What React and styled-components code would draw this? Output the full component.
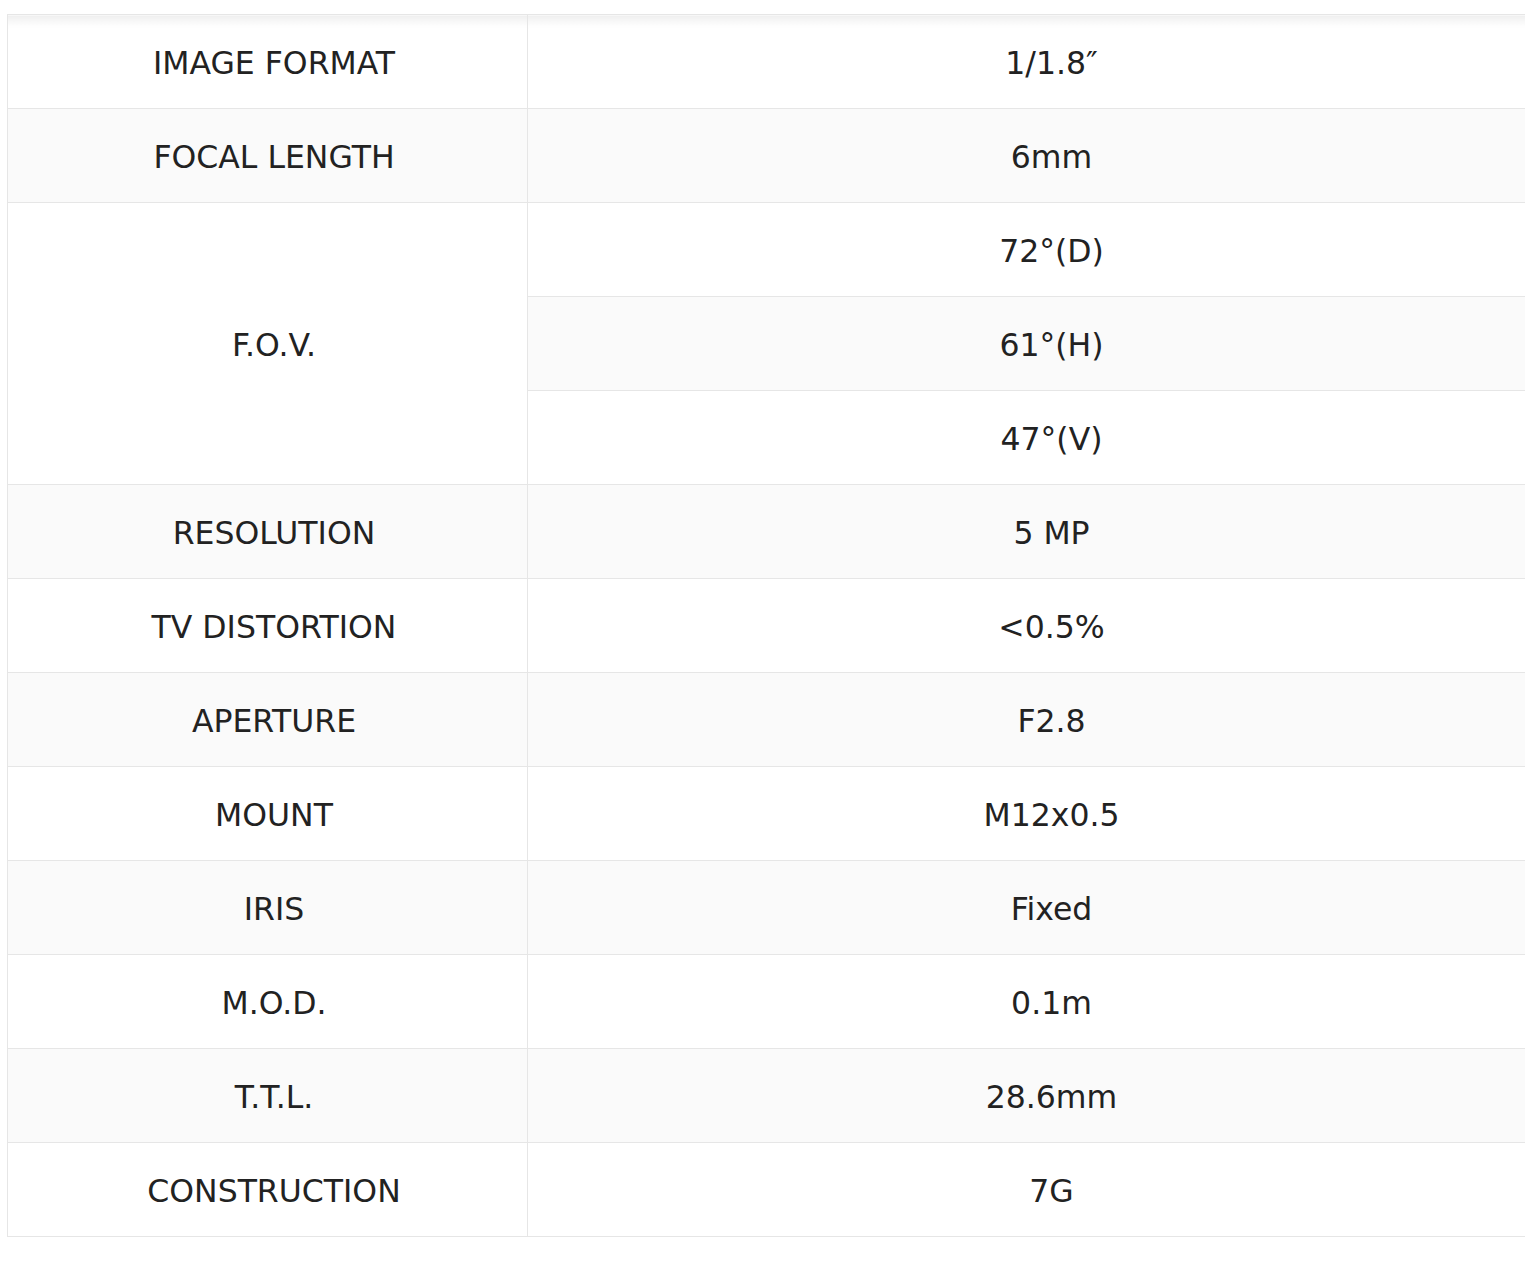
import React from 'react';
import styled, { createGlobalStyle } from 'styled-components';

const GlobalStyle = createGlobalStyle`
  html, body {
    margin: 0;
    padding: 0;
    background: #fff;
  }
  body {
    font-family: "DejaVu Sans", Verdana, sans-serif;
    color: #222;
  }
`;

const Page = styled.div`
  padding: 14px 0 0 7px;
`;

const SpecTable = styled.table`
  width: 100%;
  border-collapse: collapse;
  table-layout: fixed;
  font-size: 31.5px;
  line-height: 1;

  tbody tr:nth-child(even) td {
    background: #fafafa;
  }
  tbody tr:first-child td {
    background: linear-gradient(#efefef, #fdfdfd 10px, #fff 14px);
  }
`;

const Cell = styled.td`
  height: 89px;
  padding: 4px 0 0 ${(p) => (p.$label ? '13px' : '50px')};
  text-align: center;
  vertical-align: middle;
  border-top: 1px solid #e6e6e6;
  border-bottom: 1px solid #e6e6e6;
  border-left: 1px solid #e6e6e6;
  background: #fff;
  color: #222;
  white-space: nowrap;
`;

const specs = [
  { label: 'IMAGE FORMAT', values: ['1/1.8″'] },
  { label: 'FOCAL LENGTH', values: ['6mm'] },
  { label: 'F.O.V.', values: ['72°(D)', '61°(H)', '47°(V)'] },
  { label: 'RESOLUTION', values: ['5 MP'] },
  { label: 'TV DISTORTION', values: ['<0.5%'] },
  { label: 'APERTURE', values: ['F2.8'] },
  { label: 'MOUNT', values: ['M12x0.5'] },
  { label: 'IRIS', values: ['Fixed'] },
  { label: 'M.O.D.', values: ['0.1m'] },
  { label: 'T.T.L.', values: ['28.6mm'] },
  { label: 'CONSTRUCTION', values: ['7G'] },
];

export default function App() {
  return (
    <Page>
      <GlobalStyle />
      <SpecTable>
        <colgroup>
          <col style={{ width: '520px' }} />
          <col />
        </colgroup>
        <tbody>
          {specs.map((spec) =>
            spec.values.map((value, i) => (
              <tr key={spec.label + i}>
                {i === 0 && (
                  <Cell $label rowSpan={spec.values.length}>
                    {spec.label}
                  </Cell>
                )}
                <Cell>{value}</Cell>
              </tr>
            ))
          )}
        </tbody>
      </SpecTable>
    </Page>
  );
}
